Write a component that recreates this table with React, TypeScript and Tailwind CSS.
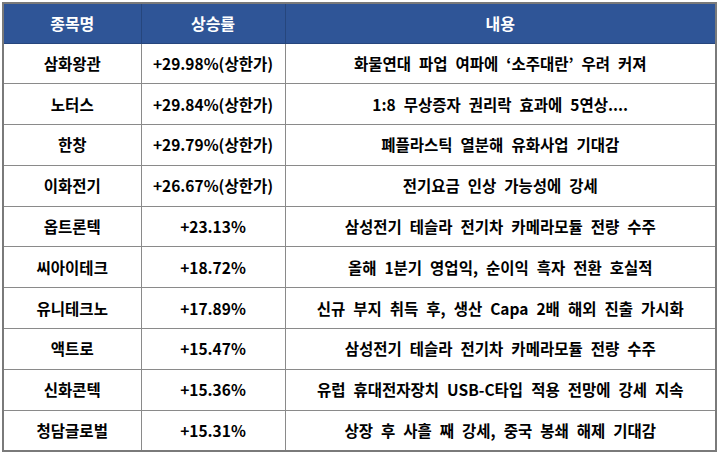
const rows = [
  ["삼화왕관", "+29.98%(상한가)", "화물연대 파업 여파에 ‘소주대란’ 우려 커져"],
  ["노터스", "+29.84%(상한가)", "1:8 무상증자 권리락 효과에 5연상...."],
  ["한창", "+29.79%(상한가)", "폐플라스틱 열분해 유화사업 기대감"],
  ["이화전기", "+26.67%(상한가)", "전기요금 인상 가능성에 강세"],
  ["옵트론텍", "+23.13%", "삼성전기 테슬라 전기차 카메라모듈 전량 수주"],
  ["씨아이테크", "+18.72%", "올해 1분기 영업익, 순이익 흑자 전환 호실적"],
  ["유니테크노", "+17.89%", "신규 부지 취득 후, 생산 Capa 2배 해외 진출 가시화"],
  ["액트로", "+15.47%", "삼성전기 테슬라 전기차 카메라모듈 전량 수주"],
  ["신화콘텍", "+15.36%", "유럽 휴대전자장치 USB-C타입 적용 전망에 강세 지속"],
  ["청담글로벌", "+15.31%", "상장 후 사흘 째 강세, 중국 봉쇄 해제 기대감"],
];

export default function App() {
  return (
    <div className="w-[720px] h-[452px] bg-white p-[2px] font-['Noto_Sans_CJK_KR','Noto_Sans',sans-serif]">
      <table className="w-[715px] border-collapse table-fixed border-2 border-[#7a7a7a] text-[15.5px] font-bold text-black [word-spacing:4.5px]">
        <colgroup>
          <col className="w-[138px]" />
          <col className="w-[144px]" />
          <col />
        </colgroup>
        <thead>
          <tr className="h-[40px] bg-[#2f5597] text-white text-[16px]">
            <th className="border border-[#26467d] font-bold">종목명</th>
            <th className="border border-[#26467d] font-bold">상승률</th>
            <th className="border border-[#26467d] font-bold">내용</th>
          </tr>
        </thead>
        <tbody>
          {rows.map((r) => (
            <tr key={r[0]} className="h-[40.8px]">
              <td className="border border-[#8a8a8a] text-center">{r[0]}</td>
              <td className="border border-[#8a8a8a] text-center">{r[1]}</td>
              <td className="border border-[#8a8a8a] text-center">{r[2]}</td>
            </tr>
          ))}
        </tbody>
      </table>
    </div>
  );
}
